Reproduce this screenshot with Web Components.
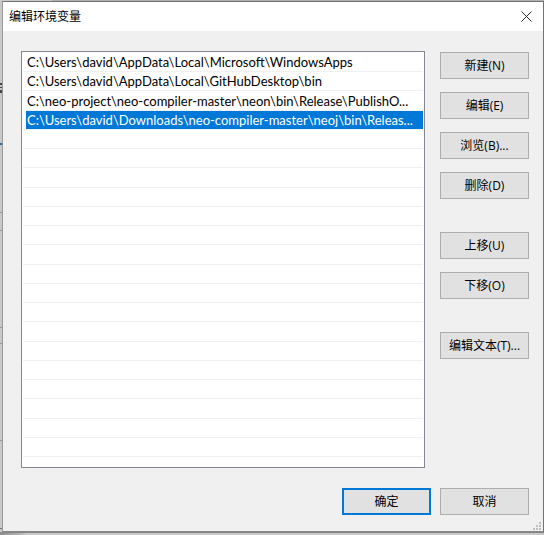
<!DOCTYPE html>
<html lang="zh-CN">
<head>
<meta charset="utf-8">
<title>编辑环境变量</title>
<style>
html, body { height: 100%; margin: 0; }
body { font: 13px/19px "Open Sans", "Noto Sans CJK SC", sans-serif; color: #000; background: #c4c4c4; overflow: hidden; }
</style>
</head>
<body>
<desk-backdrop>
  <env-dialog>
    <span slot="title">编辑环境变量</span>
    <path-list slot="list" rows="21">
      <path-row>C:\Users\david\AppData\Local\Microsoft\WindowsApps</path-row>
      <path-row>C:\Users\david\AppData\Local\GitHubDesktop\bin</path-row>
      <path-row>C:\neo-project\neo-compiler-master\neon\bin\Release\PublishO...</path-row>
      <path-row selected>C:\Users\david\Downloads\neo-compiler-master\neoj\bin\Releas...</path-row>
    </path-list>
    <button-group slot="actions">
      <push-button>新建(N)</push-button>
      <push-button>编辑(E)</push-button>
      <push-button>浏览(B)...</push-button>
      <push-button>删除(D)</push-button>
    </button-group>
    <button-group slot="actions">
      <push-button>上移(U)</push-button>
      <push-button>下移(O)</push-button>
    </button-group>
    <button-group slot="actions">
      <push-button>编辑文本(T)...</push-button>
    </button-group>
    <push-button slot="footer" primary>确定</push-button>
    <push-button slot="footer">取消</push-button>
  </env-dialog>
</desk-backdrop>
<script>
function define(name, html, setup) {
  const t = document.createElement('template');
  t.innerHTML = html;
  customElements.define(name, class extends HTMLElement {
    constructor() {
      super();
      this.attachShadow({ mode: 'open' }).append(t.content.cloneNode(true));
    }
    connectedCallback() { if (setup) setup(this, this.shadowRoot); }
  });
}

define('desk-backdrop', `
<style>
:host { display: block; box-sizing: border-box; height: 100%; padding: 1px 0 2px 2px;
  background:
    linear-gradient(#1c6cab, #1c6cab) 0 143px / 2px 2px no-repeat,
    linear-gradient(#444, #444) 0 83px / 2px 2px no-repeat,
    linear-gradient(#444, #444) 0 87px / 2px 1px no-repeat,
    linear-gradient(#444, #444) 0 90px / 2px 3px no-repeat,
    linear-gradient(#999, #999) 0 212px / 2px 1px no-repeat,
    linear-gradient(#999, #999) 0 230px / 2px 1px no-repeat,
    linear-gradient(#999, #999) 0 327px / 2px 1px no-repeat,
    linear-gradient(#999, #999) 0 343px / 2px 1px no-repeat,
    linear-gradient(#999, #999) 0 440px / 2px 1px no-repeat,
    linear-gradient(#777, #777) 0 528px / 2px 1px no-repeat,
    linear-gradient(90deg, #8c8c8c, #c4c4c4) 0 100% / 26px 3px no-repeat,
    linear-gradient(#b0b0b0, #b0b0b0) 52px 0 / 100% 1px no-repeat,
    #c8c8c8; }
</style><slot></slot>`);

define('env-dialog', `
<style>
:host { display: flex; flex-direction: column; box-sizing: border-box; height: 100%;
  border: 1px solid #737373; border-left-color: #999; border-bottom-width: 2px; border-bottom-color: #868686; background: #f0f0f0; position: relative; }
header { display: flex; align-items: center; justify-content: space-between; height: 29px; background: #fff; padding: 0 8px 0 6px; }
h1 { margin: 0; font: inherit; font-size: 12px; }
.close { display: flex; padding: 3px; margin: 0 0 0 auto; border: 0; background: none; }
main { flex: 1; min-height: 0; display: grid; grid-template-columns: 1fr 89px; grid-template-rows: 1fr auto; gap: 20px 15px; padding: 20px 14px 16px 18px; }
.actions { display: flex; flex-direction: column; gap: 33px; padding-top: 1px; }
footer { grid-column: 1 / -1; display: grid; grid-template-columns: 89px 89px; gap: 9px; justify-content: end; }
.grip { position: absolute; right: 1px; bottom: 0; }
</style>
<header><h1><slot name="title"></slot></h1>
<button class="close" type="button" aria-label="关闭"><svg width="11" height="11" viewBox="0 0 11 11"><path d="M.5.5l10 10M10.500.5l-10 10" stroke="#222" fill="none"/></svg></button></header>
<main>
<slot name="list"></slot>
<div class="actions"><slot name="actions"></slot></div>
<footer><slot name="footer"></slot></footer>
</main>
<svg class="grip" width="10" height="10" viewBox="0 0 10 10" fill="#bdbdbd"><path d="M7 1h2v2H7zM7 4h2v2H7zM4 4h2v2H4zM7 7h2v2H7zM4 7h2v2H4zM1 7h2v2H1z"/></svg>`);

define('path-list', `
<style>
:host { display: grid; grid-template-rows: repeat(21, 1fr); min-width: 0; box-sizing: border-box; border: 1px solid #828790; background: #fff; padding: 1px 1px 10px 1px; overflow: hidden; }
.blank { border-bottom: 1px solid #f0f0f0; }
</style><slot></slot>`, (el, root) => {
  const blanks = Number(el.getAttribute('rows')) - el.children.length;
  for (let i = 0; i < blanks; i++) {
    const d = document.createElement('div');
    d.className = 'blank';
    root.append(d);
  }
});

define('path-row', `
<style>
:host { display: flex; min-height: 0; min-width: 0; align-items: center; box-sizing: border-box; border-bottom: 1px solid #f0f0f0; font-family: Lato, sans-serif; font-size: 13px; white-space: nowrap; }
span { flex: 1; min-width: 0; margin-left: 3px; padding: 0 1px; line-height: 18px; overflow: hidden; }
:host([selected]) span { background: #0078d7; color: #fff; }
</style><span><slot></slot></span>`);

define('button-group', `
<style>:host { display: flex; flex-direction: column; gap: 13px; }</style><slot></slot>`);

define('push-button', `
<style>
:host { display: block; }
button { display: block; box-sizing: border-box; width: 100%; height: 27px; margin: 0; padding: 0; border: 1px solid #adadad; background: #e1e1e1; color: #000; font: inherit; font-size: 12px; white-space: nowrap; }
:host([primary]) button { border: 2px solid #0078d7; }
</style><button type="button"><slot></slot></button>`);
</script>
</body>
</html>
